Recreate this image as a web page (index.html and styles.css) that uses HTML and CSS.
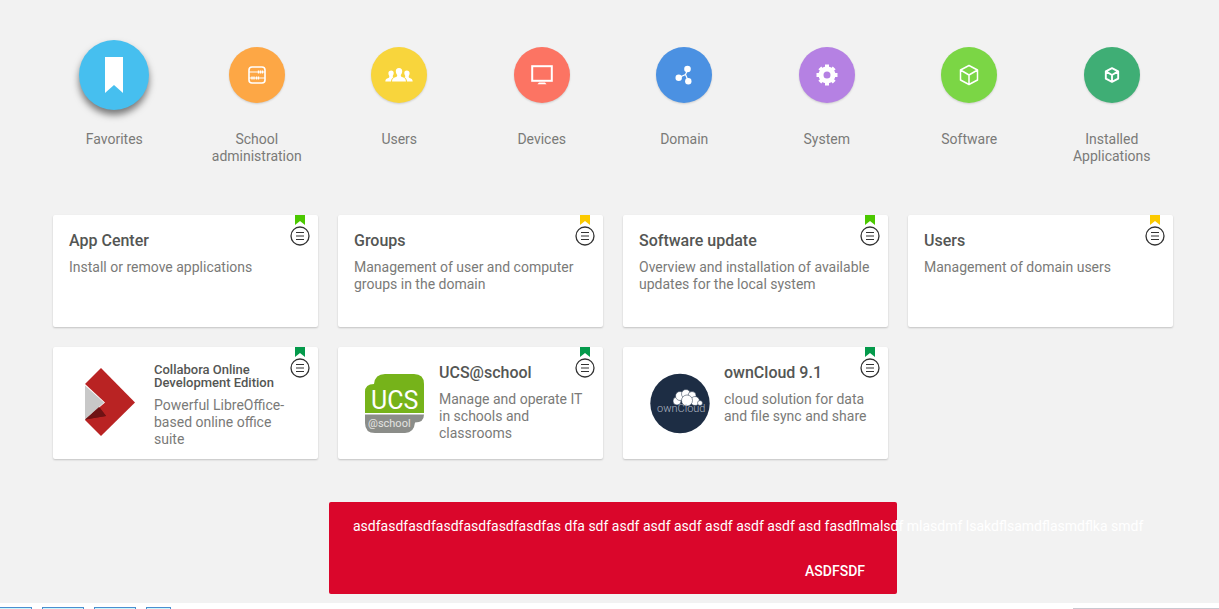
FILE: index.html
```html
<!DOCTYPE html>
<html lang="en">
<head>
  <meta charset="UTF-8">
  <title>Univention Management Console</title>
  <meta name="viewport" content="width=device-width, initial-scale=1.0">
  <link rel="stylesheet" href="styles.css">
</head>
<body>

  <!-- Shared symbols -->
  <svg class="symbols" aria-hidden="true">
    <symbol id="icon-menu" viewBox="0 0 20 20">
      <circle cx="10" cy="10" r="9" fill="#fff" stroke="#333" stroke-width="1.3"/>
      <path d="M6 6.500h8M6 10h8M6 13.500h8" stroke="#333" stroke-width="1.2"/>
    </symbol>
    <symbol id="icon-cube" viewBox="0 0 20 22">
      <path d="M10 1.5l8.5 4.5v10L10 20.500l-8.500-4.500V6zM1.500 6L10 11l8.500-5M10 11v9.500" fill="none" stroke="currentColor" stroke-linejoin="round"/>
    </symbol>
  </svg>

  <main class="overview">
    <nav class="categories">
      <button type="button" class="category selected">
        <span class="category-icon favorites">
          <svg width="18" height="36" viewBox="0 0 18 36"><path d="M0 0h18v36l-9-8-9 8z" fill="#fff"/></svg>
        </span>
        <span class="category-label">Favorites</span>
      </button>
      <button type="button" class="category">
        <span class="category-icon school">
          <svg width="18" height="18" viewBox="0 0 18 18" fill="none" stroke="#fff">
            <rect x="1" y="1" width="16" height="16" rx="3" stroke-width="1.6"/>
            <path d="M1 6h16M1 12h16" stroke-width="1.2"/>
            <path d="M10.500 4.500v3M12.500 4.500v3M14.500 4.500v3M4 10.500v3M6 10.500v3M8.500 10.500v3M10.500 10.500v3" stroke-width="1.300"/>
          </svg>
        </span>
        <span class="category-label">School administration</span>
      </button>
      <button type="button" class="category">
        <span class="category-icon users">
          <svg width="28" height="14" viewBox="0 0 28 14" fill="#fff">
            <path d="M14 0c2.200 0 3.300 1.500 3.200 3.500-.1 1.600-.7 2.700-1.400 3.500 0 1 .2 1.700 1.200 2 2 .7 3.800 1.300 4 4.500H7c.2-3.200 2-3.800 4-4.500 1-.3 1.200-1 1.200-2-.7-.8-1.300-1.900-1.400-3.500C10.700 1.500 11.800 0 14 0z"/>
            <path d="M6.200 2.500c1.700 0 2.600 1.100 2.500 2.700-.1 1.200-.5 2-1 2.700 0 .7.200 1.100.8 1.300-1.600.8-2.300 2.200-2.500 4.300H.3c.1-2.400 1.400-3 3-3.500.8-.3 1-.9 1-2.100-.6-.6-.9-1.500-.9-2.700 0-1.600 1.100-2.700 2.800-2.700z"/>
            <path d="M21.800 2.500c-1.700 0-2.600 1.100-2.500 2.700.1 1.200.5 2 1 2.700 0 .7-.2 1.100-.8 1.300 1.600.8 2.300 2.200 2.500 4.300h5.700c-.1-2.400-1.400-3-3-3.500-.8-.3-1-.9-1-2.100.6-.6.900-1.500.9-2.700 0-1.600-1.100-2.700-2.800-2.700z"/>
          </svg>
        </span>
        <span class="category-label">Users</span>
      </button>
      <button type="button" class="category">
        <span class="category-icon devices">
          <svg width="22" height="20" viewBox="0 0 22 20">
            <rect x="1.200" y="1.200" width="19.600" height="14.600" fill="none" stroke="#fff" stroke-width="2"/>
            <path d="M8 17.500h6l1.500 1.700h-9z" fill="#fff"/>
          </svg>
        </span>
        <span class="category-label">Devices</span>
      </button>
      <button type="button" class="category">
        <span class="category-icon domain">
          <svg width="18" height="20" viewBox="0 0 18 20">
            <path d="M4 12.500l6.500-3L13 4M10.500 9.500l3 7" fill="none" stroke="#fff" stroke-width="1.200"/>
            <g fill="#fff"><circle cx="3.700" cy="12.700" r="3.200"/><circle cx="12.500" cy="4" r="3.300"/><circle cx="13.300" cy="16.200" r="3.200"/></g>
          </svg>
        </span>
        <span class="category-label">Domain</span>
      </button>
      <button type="button" class="category">
        <span class="category-icon system">
          <svg width="22" height="22" viewBox="0 0 22 22">
            <circle cx="11" cy="11" r="6" fill="none" stroke="#fff" stroke-width="5"/>
            <path d="M11 .5v3M11 18.500v3M.5 11h3M18.500 11h3M3.800 3.800l2 2M16.200 16.200l2 2M3.800 18.200l2-2M16.200 5.800l2-2" stroke="#fff" stroke-width="4"/>
          </svg>
        </span>
        <span class="category-label">System</span>
      </button>
      <button type="button" class="category">
        <span class="category-icon software">
          <svg width="20" height="22" stroke-width="1.500"><use href="#icon-cube"/></svg>
        </span>
        <span class="category-label">Software</span>
      </button>
      <button type="button" class="category">
        <span class="category-icon installed">
          <svg width="16" height="16" stroke-width="2.600"><use href="#icon-cube"/></svg>
        </span>
        <span class="category-label">Installed Applications</span>
      </button>
    </nav>

    <section class="tiles">
      <article class="tile">
        <div class="tile-text">
          <h2><a href="#appcenter">App Center</a></h2>
          <p>Install or remove applications</p>
        </div>
        <span class="ribbon green"></span>
        <button type="button" class="tile-menu" aria-label="App Center menu"><svg width="20" height="20"><use href="#icon-menu"/></svg></button>
      </article>

      <article class="tile">
        <div class="tile-text">
          <h2><a href="#groups">Groups</a></h2>
          <p>Management of user and computer groups in the domain</p>
        </div>
        <span class="ribbon yellow"></span>
        <button type="button" class="tile-menu" aria-label="Groups menu"><svg width="20" height="20"><use href="#icon-menu"/></svg></button>
      </article>

      <article class="tile">
        <div class="tile-text">
          <h2><a href="#updater">Software update</a></h2>
          <p>Overview and installation of available updates for the local system</p>
        </div>
        <span class="ribbon green"></span>
        <button type="button" class="tile-menu" aria-label="Software update menu"><svg width="20" height="20"><use href="#icon-menu"/></svg></button>
      </article>

      <article class="tile">
        <div class="tile-text">
          <h2><a href="#users">Users</a></h2>
          <p>Management of domain users</p>
        </div>
        <span class="ribbon yellow"></span>
        <button type="button" class="tile-menu" aria-label="Users menu"><svg width="20" height="20"><use href="#icon-menu"/></svg></button>
      </article>

      <article class="tile">
        <svg class="tile-logo" viewBox="0 0 80 80">
          <path d="M32 5l34 34.500L32 73 16 57V21z" fill="#b92323"/>
          <path d="M16 56.500L31 45l6 8z" fill="#6f1214"/>
          <path d="M15 20l21 19.500-21 18z" fill="#fff"/>
          <path d="M16 22.500L35 39.500 16 56.500z" fill="#c8c8c8"/>
          <path d="M16 56.500L30 44l7 9z" fill="#6f1214"/>
        </svg>
        <div class="tile-text">
          <h2 class="long"><a href="#collabora">Collabora Online Development Edition</a></h2>
          <p>Powerful LibreOffice-based online office suite</p>
        </div>
        <span class="ribbon teal"></span>
        <button type="button" class="tile-menu" aria-label="Collabora Online menu"><svg width="20" height="20"><use href="#icon-menu"/></svg></button>
      </article>

      <article class="tile">
        <svg class="tile-logo" viewBox="0 0 80 80">
          <path d="M11 50V29q0-8 9-8 1-10 11-10h29q10 0 10 10v29z" fill="#76b31a"/>
          <path d="M11 51.500h59q0 8-9 8-1 10.500-10 10.500H21q-10 0-10-10z" fill="#8b8d89"/>
          <text x="17" y="46" class="ucs-name">UCS</text>
          <text x="14" y="64" class="ucs-sub">@school</text>
        </svg>
        <div class="tile-text">
          <h2><a href="#ucsschool">UCS@school</a></h2>
          <p>Manage and operate IT in schools and classrooms</p>
        </div>
        <span class="ribbon teal"></span>
        <button type="button" class="tile-menu" aria-label="UCS@school menu"><svg width="20" height="20"><use href="#icon-menu"/></svg></button>
      </article>

      <article class="tile">
        <svg class="tile-logo" viewBox="0 0 80 80">
          <circle cx="41" cy="40.500" r="29.700" fill="#1d2d44"/>
          <g fill="#fff" stroke="#1d2d44" stroke-width=".5">
            <circle cx="38" cy="38" r="4"/><circle cx="41" cy="33" r="4.500"/><circle cx="47" cy="31" r="4.500"/>
            <circle cx="53" cy="32.500" r="4"/><circle cx="56" cy="38" r="4.500"/><circle cx="61" cy="40" r="2.500"/><circle cx="48" cy="37.500" r="5.500"/>
          </g>
          <text x="18" y="49" class="owncloud-name">ownCloud</text>
        </svg>
        <div class="tile-text">
          <h2><a href="#owncloud">ownCloud 9.1</a></h2>
          <p>cloud solution for data and file sync and share</p>
        </div>
        <span class="ribbon teal"></span>
        <button type="button" class="tile-menu" aria-label="ownCloud menu"><svg width="20" height="20"><use href="#icon-menu"/></svg></button>
      </article>
    </section>

    <div class="snackbar" role="alert">
      <p>asdfasdfasdfasdfasdfasdfasdfas dfa sdf asdf asdf asdf asdf asdf asdf asd fasdflmalsdf mlasdmf lsakdflsamdflasmdflka smdf</p>
      <button type="button">ASDFSDF</button>
    </div>
  </main>

  <footer class="strip">
    <span class="strip-box first"></span>
    <span class="strip-box"></span>
    <span class="strip-box"></span>
    <span class="strip-box small"></span>
    <span class="strip-panel"></span>
  </footer>

</body>
</html>
```
FILE: styles.css
```css
* {
  box-sizing: border-box;
}

body {
  margin: 0;
  min-height: 100vh;
  display: flex;
  flex-direction: column;
  background: #f2f2f2;
  color: #7a7a78;
  font-family: Roboto, "Liberation Sans", sans-serif;
  font-size: 14px;
  line-height: 17px;
}

h2, p {
  margin: 0;
}

button {
  padding: 0;
  border: none;
  background: none;
  color: inherit;
  font: inherit;
  cursor: pointer;
}

.symbols {
  display: none;
}

.overview {
  flex: 1;
  padding: 40px 36px 8px 43px;
}

/* Categories */
.categories {
  display: grid;
  grid-template-columns: repeat(8, 1fr);
  margin-bottom: 50px;
}

.category {
  display: grid;
  grid-template-rows: 70px auto;
  align-content: start;
  justify-items: center;
  row-gap: 21px;
}

.category-icon {
  display: flex;
  align-items: center;
  justify-content: center;
  align-self: center;
  width: 56px;
  height: 56px;
  border-radius: 50%;
  color: #fff;
  box-shadow: 0 1px 2px rgba(0, 0, 0, 0.15);
}

.selected .category-icon {
  width: 70px;
  height: 70px;
  box-shadow: 0 5px 7px rgba(0, 0, 0, 0.5);
}

.category-label {
  max-width: 100px;
}

.favorites { background: #46bfef; }
.school { background: #fda745; }
.users { background: #f8d53c; }
.devices { background: #fc7463; }
.domain { background: #4b91e2; }
.system { background: #b581e3; }
.software { background: #7bd645; }
.installed { background: #3fae75; }

/* Tiles */
.tiles {
  display: grid;
  grid-template-columns: repeat(4, 1fr);
  gap: 20px;
  padding: 0 10px;
}

.tile {
  position: relative;
  display: flex;
  gap: 5px;
  min-height: 112px;
  padding: 16px 16px 8px;
  background: #fff;
  border-radius: 2px;
  box-shadow: 0 1px 2px rgba(0, 0, 0, 0.2);
}

.tile-logo {
  flex: none;
  width: 80px;
  height: 80px;
}

.tile h2 {
  margin-bottom: 9px;
  color: #545654;
  font-size: 16px;
  font-weight: 500;
  line-height: 19px;
}

.tile h2.long {
  margin-bottom: 8px;
  font-size: 13px;
  line-height: 13px;
}

.tile h2 a {
  color: inherit;
  text-decoration: none;
}

.ribbon {
  position: absolute;
  top: 0;
  right: 13px;
  width: 10px;
  height: 10px;
  clip-path: polygon(0 0, 100% 0, 100% 100%, 50% 60%, 0 100%);
}

.green { background: #4bc800; }
.yellow { background: #fcca00; }
.teal { background: #049a4b; }

.tile-menu {
  position: absolute;
  top: 11px;
  right: 8px;
  width: 20px;
  height: 20px;
}

.tile-menu svg {
  display: block;
}

.ucs-name {
  fill: #fff;
  font-size: 25px;
}

.ucs-sub {
  fill: #e4e4e2;
  font-size: 11px;
}

.owncloud-name {
  fill: #aeb6c1;
  font-size: 11px;
  font-weight: 300;
}

/* Notification */
.snackbar {
  display: flex;
  flex-direction: column;
  justify-content: space-between;
  max-width: 568px;
  min-height: 92px;
  margin: 43px auto 0;
  padding: 16px 32px 14px 24px;
  background: #da062b;
  border-radius: 2px;
  color: #fff;
}

.snackbar p {
  white-space: nowrap;
}

.snackbar button {
  align-self: flex-end;
  font-weight: 500;
}

/* Strip along the bottom edge */
.strip {
  display: flex;
  gap: 10px;
  height: 6px;
  padding-top: 4px;
  overflow: hidden;
  background: #fff;
}

.strip-box {
  width: 42px;
  height: 20px;
  border: 1px solid #4a8fd0;
  background: #cff6fd;
}

.strip-box.first {
  width: 32px;
  border-left: none;
}

.strip-box.small {
  width: 25px;
}

.strip-panel {
  width: 146px;
  height: 20px;
  margin: 1px 0 0 auto;
  background: #c8c8d0;
}
```
